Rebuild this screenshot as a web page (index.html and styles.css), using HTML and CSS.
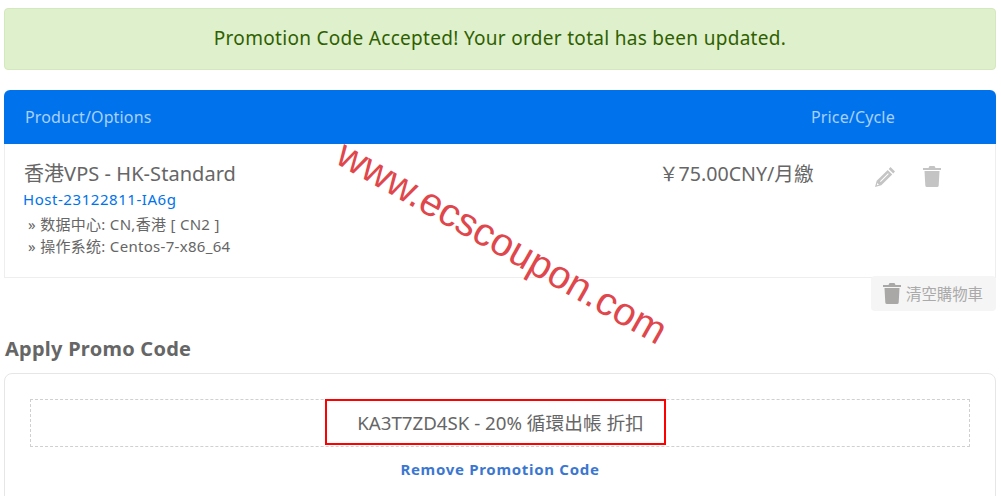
FILE: index.html
```html
<!DOCTYPE html>
<html lang="zh-Hant">
<head>
  <meta charset="UTF-8">
  <title>Shopping Cart</title>
  <link rel="stylesheet" href="styles.css">
</head>
<body>
  <div class="alert-success">Promotion Code Accepted! Your order total has been updated.</div>

  <div class="cart">
    <div class="cart-head">
      <span class="head-product">Product/Options</span>
      <span class="head-price">Price/Cycle</span>
    </div>
    <div class="cart-item">
      <div class="item-info">
        <div class="item-title">香港VPS - HK-Standard</div>
        <a class="item-host" href="#">Host-23122811-IA6g</a>
        <div class="item-options">
          <div class="item-option">» 数据中心: CN,香港 [ CN2 ]</div>
          <div class="item-option">» 操作系统: Centos-7-x86_64</div>
        </div>
      </div>
      <div class="item-price">￥75.00CNY/月繳</div>
      <div class="item-actions">
        <svg class="icon-pencil" viewBox="0 0 22 22" aria-hidden="true">
          <path d="M16.500 1 21 5.500 19.200 7.400 14.700 2.900Z M13.700 3.900 18.200 8.400 7.300 19.300 1 21 2.700 14.800Z"/>
          <path class="icon-cut" d="M14 7.200 14.700 7.900 6.700 15.900 6 15.200Z M3.200 17 5 18.800 2.900 19.300Z"/>
        </svg>
        <svg class="icon-trash" viewBox="0 0 18 21" aria-hidden="true">
          <path d="M6.500 0h5l1 2H18v2H0V2h5.500ZM1.500 5h15l-.8 14.500Q15.600 21 14 21H4q-1.600 0-1.700-1.500Z"/>
        </svg>
      </div>
    </div>
  </div>

  <div class="cart-tools">
    <a class="btn-empty" href="#">
      <svg class="icon-trash-lg" viewBox="0 0 18 21" aria-hidden="true">
        <path d="M6.500 0h5l1 2H18v2H0V2h5.500ZM1.500 5h15l-.8 14.500Q15.600 21 14 21H4q-1.600 0-1.700-1.500Z"/>
      </svg>
      清空購物車
    </a>
  </div>

  <h2 class="promo-title">Apply Promo Code</h2>
  <div class="promo-card">
    <div class="promo-code">
      <span class="promo-mark">KA3T7ZD4SK - 20% 循環出帳 折扣</span>
    </div>
    <a class="promo-remove" href="#">Remove Promotion Code</a>
  </div>

  <div class="watermark">www.ecscoupon.com</div>
</body>
</html>
```

FILE: styles.css
```css
html, body {
  height: 496px;
  overflow: hidden;
}
body {
  margin: 0;
  padding: 8px 5px 0 4px;
  font-family: "Noto Sans", "Noto Sans CJK TC", sans-serif;
  color: #666;
  background-color: #fff;
  position: relative;
}
.alert-success {
  height: 60px;
  line-height: 58px;
  text-align: center;
  font-size: 19px;
  letter-spacing: 0.3px;
  color: #2f6000;
  background-color: #dff0cc;
  border: 1px solid #d4e8bd;
  border-radius: 4px;
}
.cart {
  margin-top: 20px;
  border: 1px solid #eee;
  border-top: 0;
  border-radius: 6px 6px 0 0;
}
.cart-head {
  display: flex;
  height: 54px;
  align-items: center;
  margin: 0 -1px;
  background-color: #0073ec;
  border-radius: 6px 6px 0 0;
  color: #a9d0fb;
  font-size: 16px;
  letter-spacing: 0.15px;
}
.head-product {
  padding-left: 21px;
  width: 786px;
}
.cart-item {
  display: flex;
  height: 133px;
  padding: 16px 0 0 19px;
  box-sizing: border-box;
}
.item-info {
  width: 639px;
}
.item-title {
  font-size: 20px;
  line-height: 28px;
  letter-spacing: 0.05px;
}
.item-host {
  display: block;
  margin-left: -1px;
  font-size: 15px;
  line-height: 22px;
  color: #0073ec;
  text-decoration: none;
  letter-spacing: 0.55px;
}
.item-options {
  margin-top: 3px;
}
.item-option {
  font-size: 15px;
  line-height: 22px;
  padding-left: 4px;
  letter-spacing: 0.3px;
}
.item-price {
  width: 212px;
  font-size: 19.600px;
  line-height: 28px;
  margin-left: -4px;
  white-space: nowrap;
}
.item-actions {
  display: flex;
  gap: 27px;
  padding-top: 6px;
  margin-left: 3px;
}
.icon-pencil {
  width: 22px;
  height: 22px;
  fill: #c4c4c4;
}
.icon-cut {
  fill: #fff;
}
.icon-trash {
  width: 18px;
  height: 21px;
  fill: #c4c4c4;
}
.cart-tools {
  display: flex;
  justify-content: flex-end;
  margin-top: -2px;
}
.btn-empty {
  display: flex;
  align-items: center;
  gap: 5px;
  height: 35px;
  width: 125px;
  box-sizing: border-box;
  padding-left: 12px;
  background-color: #f5f5f5;
  border-radius: 4px;
  color: #aaa;
  font-size: 15.400px;
  text-decoration: none;
}
.icon-trash-lg {
  width: 18px;
  height: 21px;
  fill: #a9a8a6;
}
.promo-title {
  margin: 24px 0 0 1px;
  font-size: 20px;
  line-height: 28px;
  font-weight: 700;
  letter-spacing: 0.25px;
  color: #666;
}
.promo-card {
  margin-top: 10px;
  height: 140px;
  border: 1px solid #e6e6e6;
  border-radius: 8px;
  padding: 25px;
  box-sizing: border-box;
  text-align: center;
}
.promo-code {
  height: 48px;
  border: 1px dashed #d0d0d0;
  box-sizing: border-box;
  display: flex;
  justify-content: center;
}
.promo-mark {
  width: 341px;
  height: 46px;
  box-sizing: border-box;
  margin: -1px 0 0 -10px;
  padding-left: 11px;
  border: 2px solid #f00;
  line-height: 44px;
  font-size: 18.700px;
  white-space: nowrap;
}
.promo-remove {
  display: block;
  margin-top: 11px;
  font-size: 15px;
  line-height: 22px;
  font-weight: 700;
  letter-spacing: 0.7px;
  color: #3b77d0;
  text-decoration: none;
}
.watermark {
  position: absolute;
  left: 352px;
  top: 130px;
  font-family: "Liberation Sans", sans-serif;
  font-size: 39.600px;
  line-height: 46px;
  color: #e0474c;
  white-space: nowrap;
  transform-origin: 0 0;
  transform: rotate(29.500deg);
}
```
